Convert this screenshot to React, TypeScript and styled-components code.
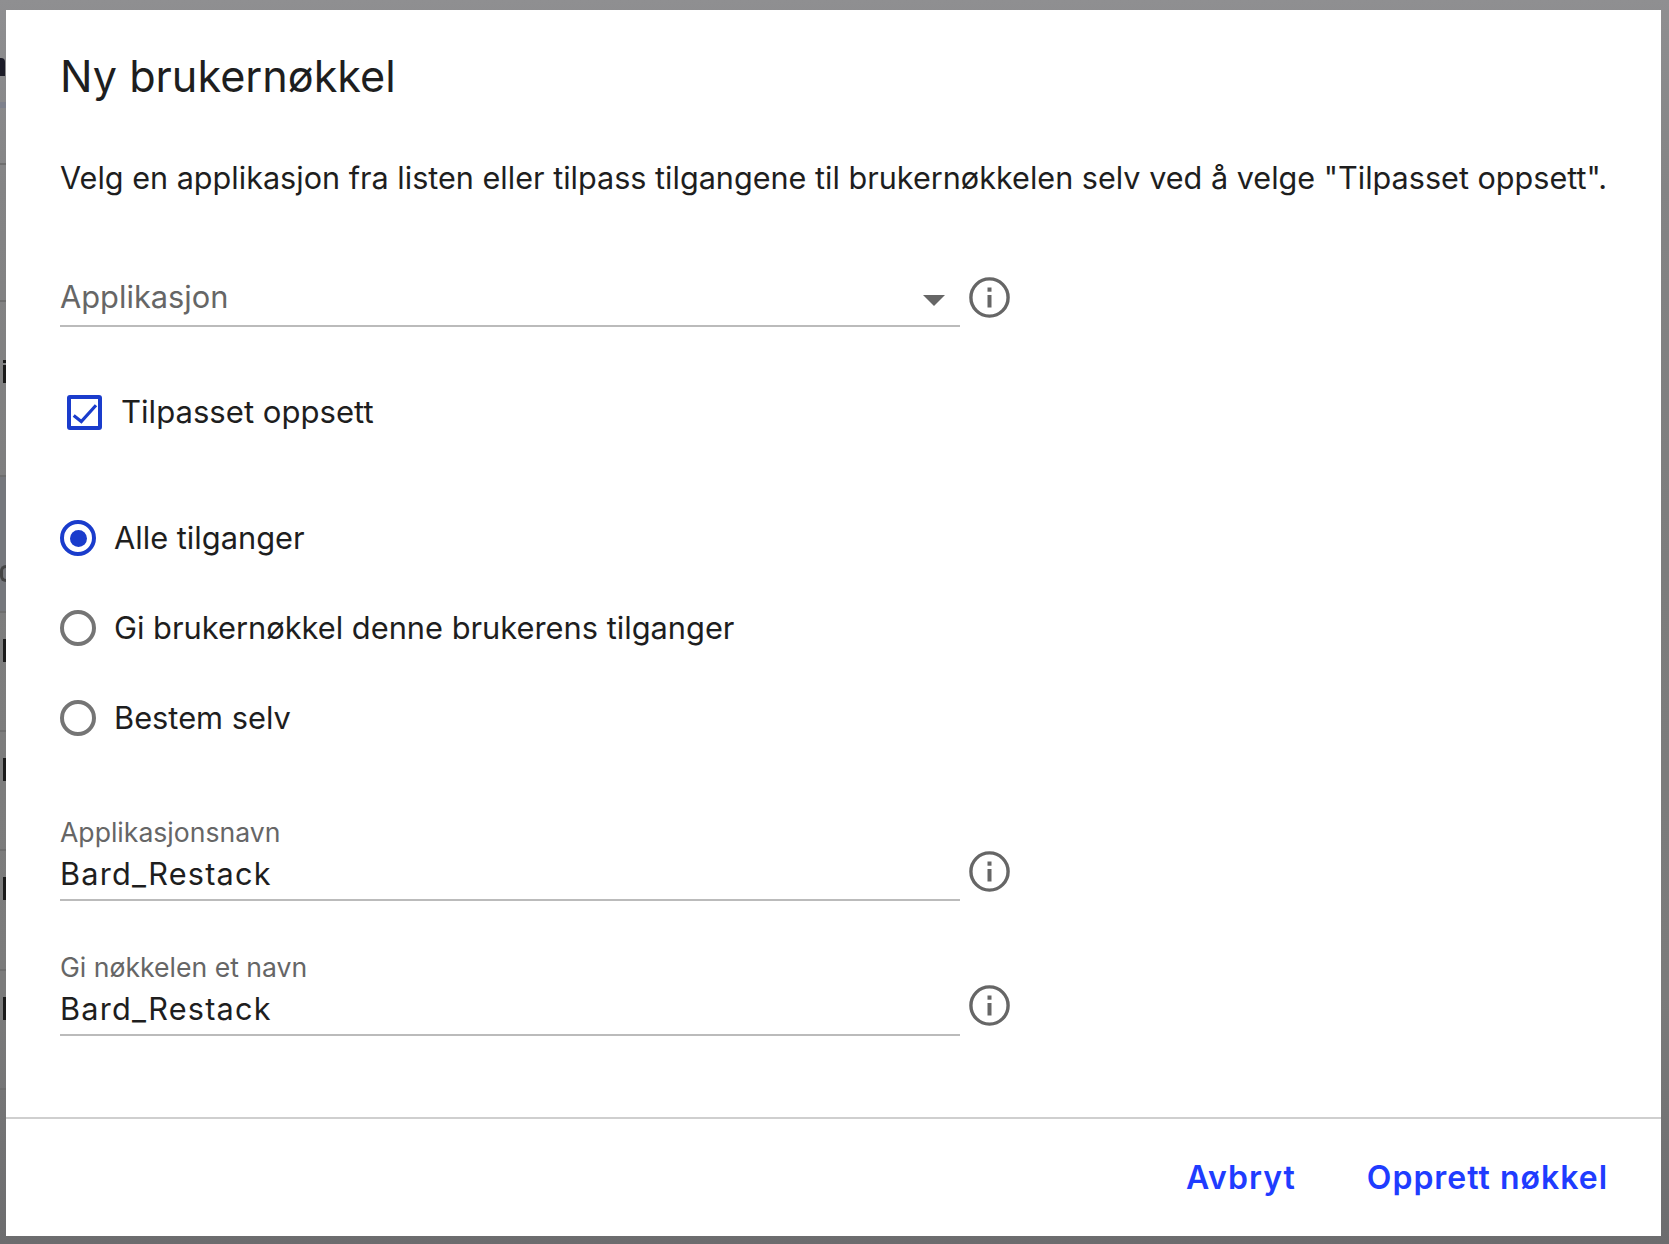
import React from 'react';
import styled, { createGlobalStyle } from 'styled-components';

const GlobalStyle = createGlobalStyle`
  html, body {
    margin: 0;
    padding: 0;
    height: 100%;
    overflow: hidden;
  }
  body {
    font-family: 'Inter', 'Noto Sans', sans-serif;
    color: #1e1e1e;
  }
`;

const Page = styled.div`
  position: relative;
  width: 1669px;
  height: 1244px;
  overflow: hidden;
  background: linear-gradient(to bottom, #8f8f91 0, #848485 15%, #7d7d7d 45%, #7b7b7b 80%, #6c6c6e 100%);
`;

const BackdropList = styled.div`
  display: flex;
  flex-direction: column;
  width: 6px;
  overflow: hidden;
`;

const BackdropRow = styled.div<{ $height: number; $tint?: boolean }>`
  height: ${(p) => p.$height}px;
  flex: none;
  box-sizing: border-box;
  border-bottom: 2px solid #6e6e6e;
  background: ${(p) => (p.$tint ? '#75777c' : 'transparent')};
  padding-top: 26px;
`;

const BackdropHead = styled.div`
  height: 6px;
  margin-top: 26px;
  background: #7e818c;
`;

const RowMark = styled.div`
  width: 3px;
  height: 23px;
  margin-left: 3px;
  background: #1a1a1a;
`;

const HeadMark = styled.div`
  width: 5px;
  height: 18px;
  margin-top: 58px;
  border-radius: 0 4px 0 0;
  background: #1c1c28;
`;

const DottedMark = styled(RowMark)`
  margin-top: 32px;
  background: linear-gradient(#1a1a1a 0 3px, transparent 3px 5px, #1a1a1a 5px);
`;

const LetterMark = styled.div`
  width: 6px;
  height: 17px;
  margin-top: 62px;
  border-radius: 6px 0 0 6px;
  border: 3px solid #444;
  border-right: 0;
  box-sizing: border-box;
`;

const Dialog = styled.div`
  position: absolute;
  left: 6px;
  top: 10px;
  width: 1655px;
  height: 1226px;
  background: #fff;
  display: flex;
  flex-direction: column;
`;

const Body = styled.div`
  flex: 1;
  padding: 0 54px;
  display: flex;
  flex-direction: column;
`;

const Title = styled.h1`
  margin: 36px 0 0;
  font-size: 43.2px;
  line-height: 60px;
  font-weight: 400;
  color: #1e1e1e;
`;

const Intro = styled.p`
  margin: 52px 0 0;
  font-size: 30.6px;
  line-height: 40px;
  white-space: nowrap;
  color: #1e1e1e;
`;

const FieldRow = styled.div<{ $top: number }>`
  display: flex;
  align-items: flex-start;
  margin-top: ${(p) => p.$top}px;
`;

const Field = styled.div`
  position: relative;
  box-sizing: border-box;
  width: 900px;
  border-bottom: 2px solid #bbb;
`;

const Placeholder = styled.div`
  font-size: 30.8px;
  line-height: 40px;
  padding-bottom: 8px;
  color: #666;
`;

const FieldLabel = styled.div`
  font-size: 26.6px;
  line-height: 32px;
  color: #666;
`;

const FieldValue = styled.div`
  font-size: 30.7px;
  letter-spacing: 1.2px;
  line-height: 40px;
  margin-top: 6px;
  padding-bottom: 5px;
  color: #1e1e1e;
`;

const Caret = styled.span`
  position: absolute;
  right: 15px;
  top: 18px;
  width: 0;
  height: 0;
  border-left: 11px solid transparent;
  border-right: 11px solid transparent;
  border-top: 11px solid #666;
`;

const InfoButton = styled.span<{ $offset: number }>`
  display: block;
  width: 41px;
  height: 41px;
  margin: ${(p) => p.$offset}px 0 0 9px;
  color: #666;
`;

const CheckLine = styled.label`
  display: flex;
  align-items: center;
  margin: 65px 0 0 7px;
  gap: 19px;
  font-size: 31.1px;
  line-height: 40px;
`;

const CheckBox = styled.span`
  display: block;
  box-sizing: border-box;
  width: 35px;
  height: 35px;
  border: 4px solid #1a3ccc;
  border-radius: 3px;
  background: #fff;
  color: #1a3ccc;
`;

const RadioGroup = styled.div`
  display: flex;
  flex-direction: column;
  gap: 50px;
  margin-top: 86px;
`;

const RadioLine = styled.label`
  display: flex;
  align-items: center;
  gap: 18px;
  font-size: 30.8px;
  line-height: 40px;
`;

const RadioDot = styled.span<{ $checked?: boolean }>`
  position: relative;
  display: block;
  box-sizing: border-box;
  width: 36px;
  height: 36px;
  border-radius: 50%;
  border: 4px solid ${(p) => (p.$checked ? '#1a3ccc' : '#757575')};

  &::after {
    content: '';
    display: ${(p) => (p.$checked ? 'block' : 'none')};
    position: absolute;
    left: 5.5px;
    top: 5.5px;
    width: 17px;
    height: 17px;
    border-radius: 50%;
    background: #1a3ccc;
  }
`;

const Footer = styled.div`
  box-sizing: border-box;
  height: 119px;
  border-top: 2px solid #cfcfcf;
  padding: 0 53px 0 0;
  display: flex;
  justify-content: flex-end;
  align-items: flex-start;
  gap: 71px;
`;

const TextButton = styled.button`
  border: 0;
  background: none;
  padding: 0;
  margin-top: 39px;
  font-family: inherit;
  font-size: 32px;
  letter-spacing: 1px;
  line-height: 40px;
  font-weight: 600;
  color: #1f3cff;
`;

function InfoIcon() {
  return (
    <svg width="41" height="41" viewBox="0 0 41 41" fill="none">
      <circle cx="20.5" cy="20.5" r="18.6" stroke="currentColor" strokeWidth="3.4" />
      <rect x="18.5" y="10.5" width="4" height="4.2" fill="currentColor" />
      <rect x="18.5" y="18" width="4" height="12.5" fill="currentColor" />
    </svg>
  );
}

function CheckIcon() {
  return (
    <svg width="27" height="27" viewBox="0 0 27 27" fill="none" style={{ display: 'block' }}>
      <path d="M2.7 16.6 L10.3 22.6 L25 6.3" stroke="currentColor" strokeWidth="3.2" />
    </svg>
  );
}

export default function App() {
  return (
    <Page>
      <GlobalStyle />
      <BackdropList>
        <HeadMark />
        <BackdropHead />
        <BackdropRow $height={57} />
        <BackdropRow $height={137} />
        <BackdropRow $height={175}>
          <DottedMark />
        </BackdropRow>
        <BackdropRow $height={136} $tint>
          <LetterMark />
        </BackdropRow>
        <BackdropRow $height={119}>
          <RowMark />
        </BackdropRow>
        <BackdropRow $height={119}>
          <RowMark />
        </BackdropRow>
        <BackdropRow $height={120}>
          <RowMark />
        </BackdropRow>
        <BackdropRow $height={119}>
          <RowMark />
        </BackdropRow>
        <BackdropRow $height={128} />
      </BackdropList>
      <Dialog>
        <Body>
          <Title>Ny brukernøkkel</Title>
          <Intro>
            Velg en applikasjon fra listen eller tilpass tilgangene til brukernøkkelen selv ved å velge "Tilpasset oppsett".
          </Intro>
          <FieldRow $top={79}>
            <Field>
              <Placeholder>Applikasjon</Placeholder>
              <Caret />
            </Field>
            <InfoButton $offset={0}>
              <InfoIcon />
            </InfoButton>
          </FieldRow>
          <CheckLine>
            <CheckBox>
              <CheckIcon />
            </CheckBox>
            Tilpasset oppsett
          </CheckLine>
          <RadioGroup>
            <RadioLine>
              <RadioDot $checked />
              Alle tilganger
            </RadioLine>
            <RadioLine>
              <RadioDot />
              Gi brukernøkkel denne brukerens tilganger
            </RadioLine>
            <RadioLine>
              <RadioDot />
              Bestem selv
            </RadioLine>
          </RadioGroup>
          <FieldRow $top={78}>
            <Field>
              <FieldLabel>Applikasjonsnavn</FieldLabel>
              <FieldValue>Bard_Restack</FieldValue>
            </Field>
            <InfoButton $offset={35}>
              <InfoIcon />
            </InfoButton>
          </FieldRow>
          <FieldRow $top={50}>
            <Field>
              <FieldLabel>Gi nøkkelen et navn</FieldLabel>
              <FieldValue>Bard_Restack</FieldValue>
            </Field>
            <InfoButton $offset={34}>
              <InfoIcon />
            </InfoButton>
          </FieldRow>
        </Body>
        <Footer>
          <TextButton>Avbryt</TextButton>
          <TextButton>Opprett nøkkel</TextButton>
        </Footer>
      </Dialog>
    </Page>
  );
}
